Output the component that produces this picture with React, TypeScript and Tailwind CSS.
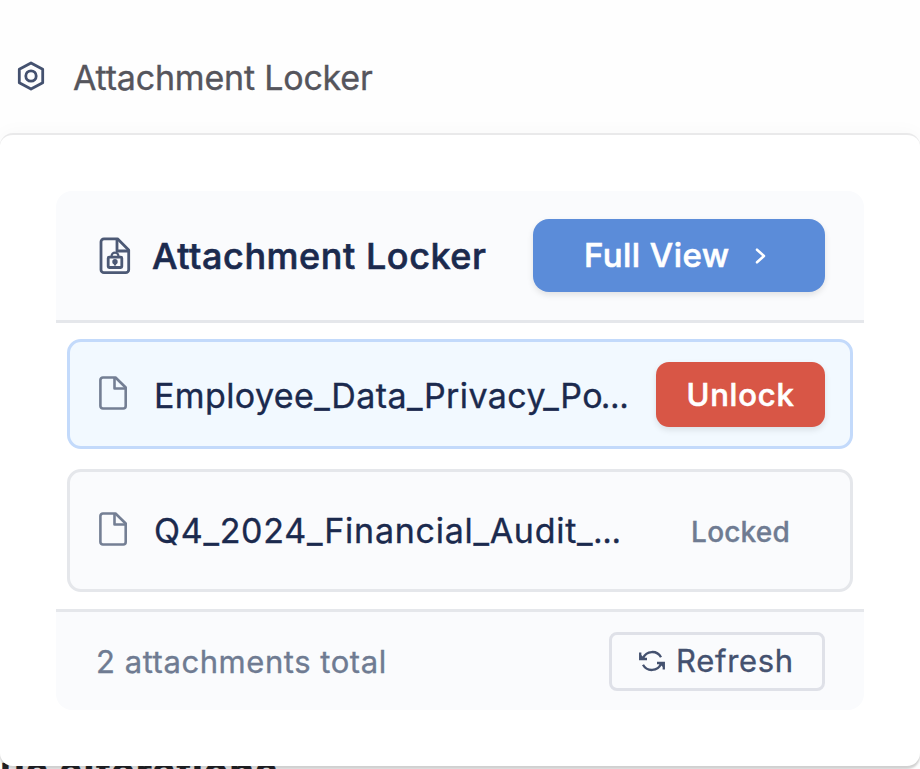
import React from 'react';

function HexIcon() {
  return (
    <svg className="h-[30px] w-7 shrink-0" viewBox="0 0 28 30" fill="none" stroke="#44516f" strokeWidth="2.8" strokeLinejoin="round">
      <path d="M14 1.9 L25.7 8.3 V21.7 L14 28.1 L2.3 21.7 V8.3 Z" />
      <circle cx="14" cy="15" r="5.2" />
    </svg>
  );
}

function LockedFileIcon() {
  return (
    <svg className="h-[38px] w-8 shrink-0" viewBox="0 0 32 38" fill="none" stroke="#4c5975" strokeWidth="2.8" strokeLinejoin="round">
      <path d="M5 1.8 H18.5 L29.7 13 V32.7 a3 3 0 0 1 -3 3 H5 a3 3 0 0 1 -3 -3 V4.8 a3 3 0 0 1 3 -3 Z" />
      <path d="M18 2 V14 H29.5" />
      <rect x="9.2" y="20.2" width="13.6" height="10.3" rx="1" strokeWidth="2.8" />
      <path d="M12.6 19.5 V19 a3.4 3.4 0 0 1 6.8 0 V19.5" strokeWidth="2.2" />
      <circle cx="16" cy="24.8" r="2.7" fill="#4c5975" stroke="none" />
      <path d="M16 25 V28.5" strokeWidth="2.2" />
    </svg>
  );
}

function FileIcon() {
  return (
    <svg className="h-[34px] w-7 shrink-0" viewBox="0 0 28 34" fill="none" stroke="#747f94" strokeWidth="2.6" strokeLinejoin="round">
      <path d="M3.9 1.5 H16.5 L26.7 11.5 V30 a2.5 2.5 0 0 1 -2.5 2.5 H3.9 a2.5 2.5 0 0 1 -2.5 -2.5 V4 a2.5 2.5 0 0 1 2.5 -2.5 Z" />
      <path d="M15.5 1.7 V12.5 H26.5" />
    </svg>
  );
}

function RefreshIcon() {
  return (
    <svg className="h-6 w-[26px] shrink-0" viewBox="0 0 26 24" fill="none" stroke="#44516f" strokeWidth="2.3">
      <path d="M4 9.2 A10 10 0 0 1 22 8.2" />
      <path d="M22 14.8 A10 10 0 0 1 4 15.8" />
      <path d="M1.2 3.6 V10 H8" />
      <path d="M24.8 20.4 V14 H18" />
      <path d="M1 5 L6.5 10 H1 Z M25 19 L19.5 14 H25 Z" fill="#44516f" stroke="none" />
    </svg>
  );
}

export default function App() {
  return (
    <div className="relative h-[769px] w-[920px] overflow-hidden bg-[#fefefe] font-['Inter',sans-serif] whitespace-nowrap [-webkit-text-stroke:0.35px_currentcolor]">
      <div className="flex h-[133px] items-start">
        <div className="ml-[17px] mt-[61px]"><HexIcon /></div>
        <h1 className="ml-[28px] mt-[58px] text-[34px] leading-[40px] tracking-[-0.2px] text-[#55555c]">Attachment Locker</h1>
      </div>
      <div className="absolute top-[751px] left-0 text-[40px] leading-[40px] font-bold tracking-[0.9px] text-[#242428]">us alterations</div>
      <main className="relative h-[633px] rounded-[13px] border-t-2 border-[#e9e9ea] bg-white px-14 pt-14 shadow-[0_0_20px_rgba(0,0,0,0.03),0_3px_2px_rgba(0,0,0,0.17)]">
        <section className="h-[519px] overflow-hidden rounded-[16px]">
          <header className="flex h-[132px] items-center border-b-[3px] border-[#e5e7eb] bg-[#fafbfd] pr-[39px] pl-[43px]">
            <LockedFileIcon />
            <h2 className="ml-[21px] mt-px text-[36px] font-medium tracking-[0.55px] text-[#1b2a4e] [-webkit-text-stroke:0.6px_currentcolor]">Attachment Locker</h2>
            <button className="ml-auto flex h-[73px] w-[292px] items-center rounded-[16px] bg-[#5b8cd9] pl-[51px] text-[33px] font-medium tracking-[0.45px] text-white shadow-[0_3px_6px_rgba(0,0,0,0.1)] [-webkit-text-stroke:0.6px_currentcolor]">
              <span className="w-[145px] pt-px">Full View</span>
              <svg className="ml-[26px] h-4 w-3" viewBox="0 0 12 16" fill="none" stroke="white" strokeWidth="2.5" strokeLinecap="round" strokeLinejoin="round"><path d="M2 1.7 L9 8 L2 14.3" /></svg>
            </button>
          </header>
          <div className="flex h-[286px] flex-col gap-5 px-[11px] pt-[16px]">
            <article className="flex h-[110px] shrink-0 items-center rounded-[14px] border-[3px] border-[#c3dafb] bg-[#f2f9ff] pr-[25px] pl-[29px]">
              <div className="-mt-[2px]"><FileIcon /></div>
              <span className="ml-[27px] pt-[2px] text-[34px] tracking-[0.4px] text-[#1b2a4e]">Employee_Data_Privacy_Po<span className="-ml-[2px] text-[32px] tracking-[-1px]">…</span></span>
              <button className="ml-auto h-[65px] w-[169px] rounded-[13px] bg-[#d85646] pt-[2px] text-[31px] font-medium tracking-[0.8px] text-white shadow-[0_3px_6px_rgba(0,0,0,0.1)] [-webkit-text-stroke:0.6px_currentcolor]">Unlock</button>
            </article>
            <article className="flex h-[123px] shrink-0 items-center rounded-[14px] border-[3px] border-[#e5e7eb] bg-[#fafbfd] pr-[60px] pl-[29px]">
              <div className="-mt-1"><FileIcon /></div>
              <span className="ml-[27px] text-[34px] tracking-[0.73px] text-[#1b2a4e]">Q4_2024_Financial_Audit_<span className="text-[32px] tracking-[-1px]">…</span></span>
              <span className="ml-auto pt-[2px] text-[28px] font-medium tracking-[0.2px] text-[#6f7b92]">Locked</span>
            </article>
          </div>
          <footer className="flex h-[101px] items-center justify-between border-t-[3px] border-[#e5e7eb] bg-[#fafbfd] pr-[39px] pl-10">
            <span className="pt-[2px] text-[31px] tracking-[0.55px] text-[#6f7b92]">2 attachments total</span>
            <button className="flex h-[59px] w-[216px] items-center rounded-lg border-[3px] border-[#dfe1e8] pl-[27px] text-[#44516f]">
              <RefreshIcon />
              <span className="ml-[11px] pt-px text-[31px] tracking-[0.7px]">Refresh</span>
            </button>
          </footer>
        </section>
      </main>
    </div>
  );
}
